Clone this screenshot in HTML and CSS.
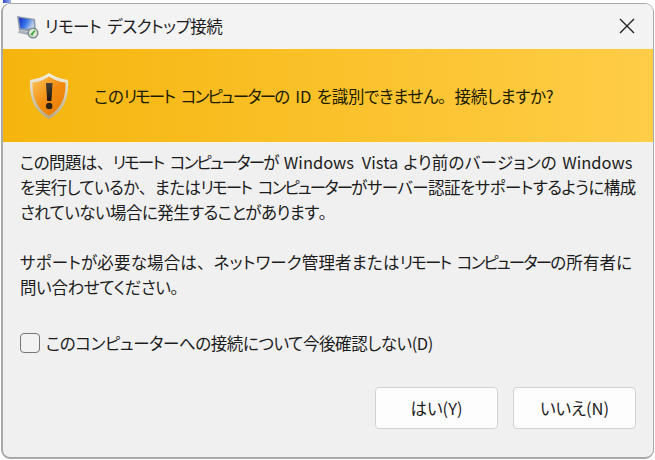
FILE: index.html
```html
<!DOCTYPE html>
<html lang="ja">
<head>
<meta charset="utf-8">
<title>リモート デスクトップ接続</title>
<link rel="stylesheet" href="styles.css">
</head>
<body>
<div class="window">
  <header class="titlebar">
    <svg class="app-icon" width="26" height="26" viewBox="0 0 26 26">
      <defs>
        <linearGradient id="scr" x1="0" y1="0" x2="1" y2="0.4"><stop offset="0" stop-color="#1428c8"/><stop offset="0.55" stop-color="#3a78e8"/><stop offset="1" stop-color="#c4d4ec"/></linearGradient>
      </defs>
      <path d="M3 3 L21 6 L22 19 L5 17 Z" fill="#8d97a8"/>
      <path d="M5 4.8 L19.5 7 L20.3 16.8 L6.4 15.2 Z" fill="url(#scr)"/>
      <path d="M5 17 L15 19 L14 22 L4 20 Z" fill="#a9b0bb"/>
      <circle cx="19" cy="20" r="5.6" fill="#7f8a8c"/>
      <circle cx="19" cy="20" r="4" fill="#dfe9d8"/>
      <path d="M16.8 22 L21 17.6 M17.8 20.2 L18.6 22.4" stroke="#3ea53a" stroke-width="1.6" fill="none"/>
    </svg>
    <span class="title">リモート デスクトップ接続</span>
    <svg class="close" width="16" height="16" viewBox="0 0 16 16"><path d="M1 1 L15 15 M15 1 L1 15" stroke="#222" stroke-width="1.4" fill="none"/></svg>
  </header>
  <section class="banner">
    <svg class="shield" width="42" height="48" viewBox="0 0 42 48">
      <defs>
        <linearGradient id="sh" x1="0" y1="0" x2="1" y2="1"><stop offset="0" stop-color="#fdc65a"/><stop offset="0.5" stop-color="#f28c10"/><stop offset="1" stop-color="#e77a06"/></linearGradient>
        <linearGradient id="rim" x1="0" y1="0" x2="0" y2="1"><stop offset="0" stop-color="#f4f0df"/><stop offset="1" stop-color="#b5a987"/></linearGradient>
        <linearGradient id="mark" x1="0" y1="0" x2="0" y2="1"><stop offset="0" stop-color="#4a4238"/><stop offset="1" stop-color="#1c140c"/></linearGradient>
      </defs>
      <path d="M21 1 C27 5 34 7 40 8 C41 26 36 39 21 47 C6 39 1 26 2 8 C8 7 15 5 21 1 Z" fill="url(#rim)"/>
      <path d="M21 4.5 C26 8 32 10 37.5 10.6 C38 26 33 37 21 43.8 C9 37 4 26 4.5 10.6 C10 10 16 8 21 4.5 Z" fill="url(#sh)"/>
      <path d="M18 11 H24.6 L23.4 29 H19.2 Z" fill="url(#mark)"/>
      <circle cx="21.2" cy="34" r="3.2" fill="#2b2118"/>
    </svg>
    <p class="question">この<span class="kata">リモート コンピューター</span>の <span class="lat">ID</span> を識別できません<span class="punct">。</span>接続しますか?</p>
  </section>
  <main class="body">
    <p class="para">
      <span class="line line-first">この問題は<span class="punct">、</span><span class="kata">リモート コンピューター</span>が <span class="lat">Windows Vista</span> <span class="narrow">より前のバージョンの</span> <span class="lat">Windows</span></span>
      <span class="line line-second">を実行しているか<span class="punct">、</span>または<span class="kata">リモート コンピューター</span>がサーバー認証をサポートするように構成</span>
      <span class="line line-third">されていない場合に発生することがあります<span class="punct">。</span></span>
    </p>
    <p class="para">
      <span class="line line-fourth">サポートが必要な場合は<span class="punct">、</span>ネットワーク管理者または<span class="kata">リモート コンピューター</span>の所有者に</span>
      <span class="line line-fifth">問い合わせてください<span class="punct">。</span></span>
    </p>
    <label class="check"><span class="box"></span><span>このコンピューターへの接続について今後確認しない(D)</span></label>
  </main>
  <footer class="actions">
    <button class="btn">はい(Y)</button>
    <button class="btn">いいえ(N)</button>
  </footer>
</div>
</body>
</html>
```
FILE: styles.css
```css
* { box-sizing: border-box; }
html, body { margin: 0; height: 100%; }
body {
  background: #fff;
  padding: 3px 1px 1px 1px;
  font-family: "Noto Sans CJK JP", "Noto Sans", sans-serif;
  font-feature-settings: "palt";
  font-size: 16.5px;
  color: #1c1c1c;
  overflow: hidden;
  position: relative;
}
body::before {
  content: "";
  position: absolute;
  left: 3px;
  top: 0;
  width: 8px;
  height: 3px;
  background: linear-gradient(90deg, #2a48c8, #a8b6e6);
}
.window {
  width: 653px;
  height: 456px;
  background: #f0f0f0;
  border: 2px solid #a9a9a9;
  border-width: 1px 1px 2px 2px;
  border-radius: 9px;
  overflow: hidden;
  display: flex;
  flex-direction: column;
}
.titlebar {
  height: 44px;
  flex: none;
  background: #f3f3f3;
  display: flex;
  align-items: center;
  padding: 0 18px 0 11px;
}
.app-icon { margin-right: 5px; }
.title { flex: 1; letter-spacing: -0.5px; word-spacing: 3px; }
.banner {
  height: 95px;
  flex: none;
  background: linear-gradient(90deg, #f5b50d 0%, #ffcd47 100%);
  border-top: 1px solid #f7f3e4;
  border-bottom: 1px solid #f7f3e4;
  display: flex;
  align-items: center;
  padding-left: 25px;
}
.shield { margin-right: 24px; }
.question { margin: 0; color: #1c1c00; letter-spacing: -0.3px; word-spacing: 2px; white-space: nowrap; }
.lat { letter-spacing: 0; word-spacing: 4px; }
.kata { letter-spacing: -1.9px; word-spacing: 5px; }
.narrow { letter-spacing: 0.3px; }
.punct { font-feature-settings: normal; }
.body { padding: 7px 0 0 17px; flex: 1; }
.para { margin: 0 0 25px; line-height: 25px; white-space: nowrap; }
.line { display: block; }
.line-first { letter-spacing: -0.6px; word-spacing: 2px; }
.line-second { letter-spacing: -0.55px; }
.line-third { letter-spacing: -0.55px; }
.line-fourth { letter-spacing: 0.15px; }
.line-fifth { letter-spacing: -0.35px; }
.check { display: flex; align-items: center; height: 25px; margin-top: 30px; letter-spacing: -0.42px; }
.box {
  width: 20px; height: 20px; margin-right: 6px;
  border: 1.5px solid #777; border-radius: 4px; background: #f2f2f2;
}
.actions {
  flex: none;
  display: flex;
  justify-content: flex-end;
  gap: 15px;
  padding: 0 17px 28px 0;
}
.btn {
  width: 123px; height: 42px;
  background: #fdfdfd;
  border: 1px solid #d2d2d2;
  border-radius: 4px;
  font: inherit;
  font-feature-settings: "palt";
  color: #1c1c1c;
}
```
